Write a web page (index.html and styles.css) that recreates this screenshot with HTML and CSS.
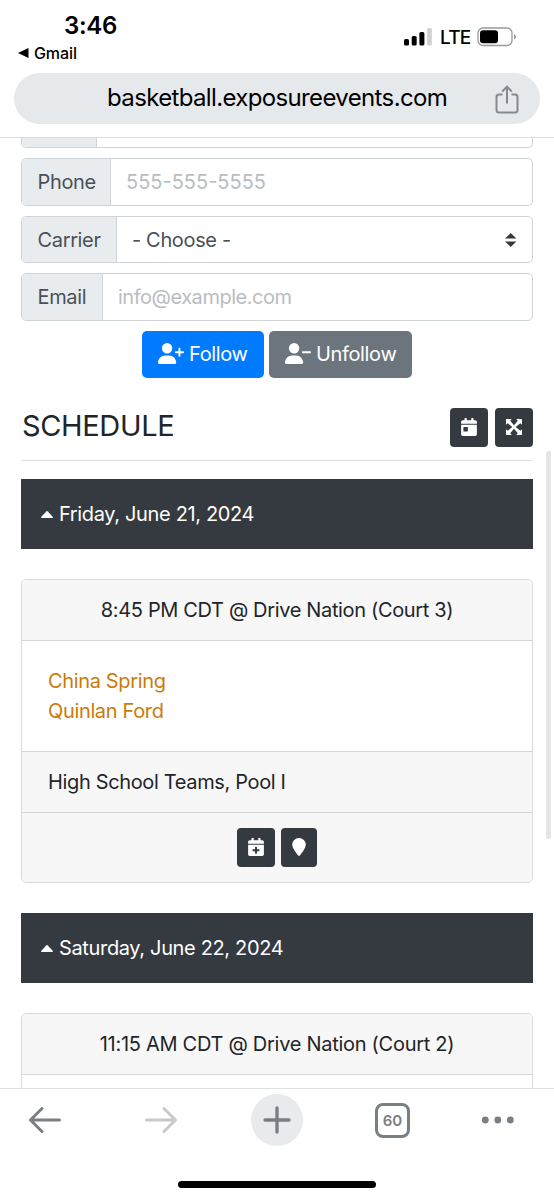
FILE: index.html
```html
<!DOCTYPE html>
<html lang="en">
<head>
<meta charset="utf-8">
<title>Schedule</title>
<link rel="stylesheet" href="styles.css">
</head>
<body>
<div class="phone">
  <header class="top">
    <div class="status">
      <div class="status-left">
        <div class="time"><span>3:46</span></div>
        <div class="back-app"><svg width="11" height="10" viewBox="0 0 11 10"><path d="M0 5 10.5 0v10z"/></svg><span>Gmail</span></div>
      </div>
      <div class="status-right">
        <svg class="signal" width="28" height="18" viewBox="0 0 28 18"><rect x="0" y="11" width="5" height="6.5" rx="1.5"/><rect x="7.7" y="8" width="5" height="9.5" rx="1.5"/><rect x="15.4" y="4" width="5" height="13.500" rx="1.500"/><rect x="23.100" y="0" width="4.700" height="17.500" rx="1.500" fill="#d0d0d0"/></svg>
        <span class="lte">LTE</span>
        <svg class="battery" width="40" height="20" viewBox="0 0 40 20"><rect x="1" y="1" width="34" height="17.500" rx="5" fill="none" stroke="#98989a" stroke-width="1.300"/><rect x="3" y="3.200" width="18" height="13" rx="3"/><path d="M37 7q2 1 2 2.800t-2 2.800z" fill="#98989a"/></svg>
      </div>
    </div>
    <div class="address">
      <span class="url">basketball.exposureevents.com</span>
      <svg class="share" width="24" height="30" viewBox="0 0 24 30"><path d="M7.500 9.500H4A2.500 2.500 0 0 0 1.500 12v13A2.500 2.500 0 0 0 4 27.500h16a2.500 2.500 0 0 0 2.500-2.500V12A2.500 2.500 0 0 0 20 9.500h-3.500M12 18.500V2M7.200 6.500 12 1.700l4.800 4.800" fill="none" stroke="#85898e" stroke-width="2"/></svg>
    </div>
  </header>

  <main class="page">
    <div class="field field-cut"><div class="label label-cut"></div><div class="input"></div></div>
    <div class="field"><div class="label label-phone"><span>Phone</span></div><div class="input placeholder"><span class="number">555-555-5555</span></div></div>
    <div class="field field-carrier"><div class="label label-carrier"><span>Carrier</span></div><div class="input select"><span>- Choose -</span><svg width="12" height="14" viewBox="0 0 12 14"><path d="M0 5.600 5.700 0l5.700 5.600zM0 8.400h11.400L5.700 14z" fill="#343a40"/></svg></div></div>
    <div class="field"><div class="label label-email"><span>Email</span></div><div class="input placeholder"><span class="mail">info@example.com</span></div></div>

    <div class="actions">
      <div class="btn btn-primary"><svg width="26" height="21" viewBox="0 0 640 512"><path d="M96 128a128 128 0 1 1 256 0A128 128 0 1 1 96 128zM0 482.300C0 383.800 79.800 304 178.300 304h91.400C368.200 304 448 383.800 448 482.300c0 16.400-13.300 29.700-29.700 29.700H29.700C13.300 512 0 498.700 0 482.300zM504 312V248H440c-13.300 0-24-10.700-24-24s10.700-24 24-24h64V136c0-13.300 10.700-24 24-24s24 10.700 24 24v64h64c13.300 0 24 10.700 24 24s-10.700 24-24 24H552v64c0 13.300-10.700 24-24 24s-24-10.700-24-24z"/></svg><span>Follow</span></div>
      <div class="btn btn-secondary"><svg width="26" height="21" viewBox="0 0 640 512"><path d="M96 128a128 128 0 1 1 256 0A128 128 0 1 1 96 128zM0 482.300C0 383.800 79.800 304 178.300 304h91.400C368.200 304 448 383.800 448 482.300c0 16.400-13.300 29.700-29.700 29.700H29.700C13.300 512 0 498.700 0 482.300zM440 200H616c13.300 0 24 10.700 24 24s-10.700 24-24 24H440c-13.300 0-24-10.700-24-24s10.700-24 24-24z"/></svg><span>Unfollow</span></div>
    </div>

    <div class="heading">
      <h1><span>SCHEDULE</span></h1>
      <div class="icon-btn"><svg width="16" height="18" viewBox="0 0 448 512"><path d="M0 464c0 26.500 21.500 48 48 48h352c26.500 0 48-21.500 48-48V192H0v272zm64-192c0-8.800 7.200-16 16-16h96c8.800 0 16 7.200 16 16v96c0 8.800-7.200 16-16 16H80c-8.800 0-16-7.200-16-16v-96zM400 64h-48V16c0-8.800-7.200-16-16-16h-32c-8.800 0-16 7.200-16 16v48H160V16c0-8.800-7.200-16-16-16h-32c-8.800 0-16 7.200-16 16v48H48C21.500 64 0 85.500 0 112v48h448v-48c0-26.500-21.500-48-48-48z"/></svg></div>
      <div class="icon-btn"><svg width="16" height="16" viewBox="0 0 16 16"><path d="M0 .6Q0 0 .6 0H5.800L4.200 1.700 8 6.300l3.800-4.600L10.200 0h5.200q.6 0 .6.600V5.800l-1.700-1.600L9.700 8l4.600 3.800L16 10.200v5.200q0 .6-.6.600h-5.200l1.600-1.700L8 9.700l-3.800 4.600L5.800 16H.6Q0 16 0 15.400v-5.200l1.700 1.600L6.300 8 1.700 4.200 0 5.800z"/></svg></div>
    </div>

    <div class="day"><svg width="12" height="7" viewBox="0 0 12 7"><path d="M.6 7Q-.4 6.600.5 5.600L5.200.5q.8-.8 1.600 0l4.700 5.100q.9 1-.1 1.400z"/></svg><span>Friday, June 21, 2024</span></div>

    <section class="card">
      <div class="card-head"><span>8:45 PM CDT @ Drive Nation (Court 3)</span></div>
      <div class="teams"><a><span>China Spring</span></a><a><span>Quinlan Ford</span></a></div>
      <div class="pool"><span>High School Teams, Pool I</span></div>
      <div class="tools">
        <div class="icon-btn"><svg width="16" height="18" viewBox="0 0 448 512"><path d="M0 464c0 26.500 21.500 48 48 48h352c26.500 0 48-21.500 48-48V192H0v272zM196 264q0-14 14-14h28q14 0 14 14v58h58q14 0 14 14v28q0 14-14 14h-58v58q0 14-14 14h-28q-14 0-14-14v-58h-58q-14 0-14-14v-28q0-14 14-14h58zM400 64h-48V16c0-8.800-7.200-16-16-16h-32c-8.800 0-16 7.200-16 16v48H160V16c0-8.800-7.200-16-16-16h-32c-8.800 0-16 7.200-16 16v48H48C21.500 64 0 85.500 0 112v48h448v-48c0-26.500-21.500-48-48-48z" fill-rule="evenodd"/></svg></div>
        <div class="icon-btn pin"><svg width="14" height="18" viewBox="0 0 384 512"><path d="M384 192c0 87.400-117 243-168.300 307.200-12.300 15.300-35.100 15.300-47.400 0C117 435 0 279.400 0 192 0 86 86 0 192 0s192 86 192 192z"/></svg></div>
      </div>
    </section>

    <div class="day"><svg width="12" height="7" viewBox="0 0 12 7"><path d="M.6 7Q-.4 6.600.5 5.600L5.200.5q.8-.8 1.600 0l4.700 5.100q.9 1-.1 1.400z"/></svg><span>Saturday, June 22, 2024</span></div>

    <section class="card">
      <div class="card-head"><span class="late">11:15 AM CDT @ Drive Nation (Court 2)</span></div>
      <div class="teams"></div>
    </section>
    <div class="scrollbar"></div>
  </main>

  <footer class="bottom">
    <nav class="nav">
      <svg width="34" height="28" viewBox="0 0 34 28"><path d="M31.500 14H2.500M14 2.500 2.500 14 14 25.500" fill="none" stroke="#7a7f83" stroke-width="3" stroke-linecap="round" stroke-linejoin="round"/></svg>
      <svg class="forward" width="34" height="28" viewBox="0 0 34 28"><path d="M2.500 14h29M20 2.500 31.500 14 20 25.500" fill="none" stroke="#c8c9ca" stroke-width="3" stroke-linecap="round" stroke-linejoin="round"/></svg>
      <div class="plus"><svg width="28" height="28" viewBox="0 0 28 28"><path d="M14 2v24M2 14h24" fill="none" stroke="#7a7f83" stroke-width="3.300" stroke-linecap="round"/></svg></div>
      <div class="tabs"><span>60</span></div>
      <svg class="more" width="34" height="8" viewBox="0 0 34 8" fill="#7a7f83"><circle cx="4.300" cy="4" r="3.400"/><circle cx="16.800" cy="4" r="3.400"/><circle cx="29.300" cy="4" r="3.400"/></svg>
    </nav>
    <div class="home"></div>
  </footer>
</div>
</body>
</html>
```
FILE: styles.css
```css
* { box-sizing: border-box; }
body { margin: 0; background: #fff; font-family: Inter, "Liberation Sans", sans-serif; font-size: 20px; color: #212529; }
svg { display: block; flex: none; }
span { white-space: nowrap; }
.phone { width: 554px; height: 1200px; display: flex; flex-direction: column; overflow: hidden; }

.top { height: 138px; flex: none; border-bottom: 1px solid #dcdddf; color: #000; }
.status { height: 73px; display: flex; justify-content: space-between; }
.status-left { padding: 10px 0 0 18px; }
.time { padding-left: 46px; height: 32px; line-height: 32px; font-size: 24px; font-weight: 600; letter-spacing: -0.3px; }
.back-app { display: flex; align-items: center; gap: 5px; height: 22px; font-size: 16px; font-weight: 500; letter-spacing: -0.1px; }
.status-right { display: flex; align-items: flex-start; padding: 27px 37px 0 0; }
.signal { margin-top: 1px; }
.lte { margin-left: 8px; font-size: 19px; line-height: 22px; font-weight: 500; width: 29px; letter-spacing: -0.8px; }
.battery { margin-left: 8px; }
.address { margin: 0 14px; height: 51px; border-radius: 26px; background: #e6e9ec; display: flex; align-items: center; justify-content: space-between; padding: 0 21px 0 93px; }
.url { font-size: 24px; line-height: 30px; letter-spacing: -0.64px; margin-top: -2px; }
.share { margin-top: 2px; }

.page { flex: 1; min-height: 0; overflow: hidden; position: relative; padding: 0 21px; background: #fff; letter-spacing: -0.35px; }
.field { display: flex; height: 48px; margin-bottom: 10px; border: 1.500px solid #ced4da; border-radius: 5px; overflow: hidden; color: #495057; }
.field-cut { height: 10px; border-top: 0; border-radius: 0 0 5px 5px; margin-bottom: 10px; }
.field-carrier { height: 47px; }
.label { background: #e9ecef; border-right: 1px solid #ced4da; padding-left: 15.500px; display: flex; align-items: center; }
.label-cut { width: 75px; }
.label-phone { width: 89px; }
.label-carrier { width: 95px; }
.label-email { width: 81px; }
.input { flex: 1; display: flex; align-items: center; padding-left: 15px; }
.placeholder { color: #b9bdc1; }
.number { letter-spacing: 0; }
.mail { letter-spacing: -0.47px; }
.select { justify-content: space-between; padding-right: 15px; }

.actions { display: flex; justify-content: center; gap: 5px; }
.btn { height: 47px; border-radius: 5px; display: flex; align-items: center; color: #fff; padding-left: 16px; gap: 5px; }
.btn svg { fill: #fff; margin-top: -3px; }
.btn span { margin-top: -1px; }
.btn-primary { width: 122px; background: #007bff; }
.btn-secondary { width: 143px; background: #6c757d; }

.heading { display: flex; align-items: center; margin-top: 21px; height: 62px; border-bottom: 1px solid #dfe1e5; padding-bottom: 4px; }
.heading h1 { flex: 1; margin: 0; font-size: 29px; line-height: 36px; font-weight: 400; padding: 0 0 4px 1px; }
.heading .icon-btn + .icon-btn { margin-left: 7px; }
.icon-btn { width: 38px; height: 39px; border-radius: 4px; background: #343a40; display: flex; align-items: center; justify-content: center; padding-bottom: 1px; }
.icon-btn svg { fill: #fff; }
.day { height: 70px; background: #343a40; color: #fff; display: flex; align-items: center; gap: 6px; padding-left: 20px; margin-top: 18px; }
.day svg { fill: #fff; }

.card { margin: 30px 0; border: 1px solid #d9dadb; border-radius: 5px; overflow: hidden; }
.card-head { height: 61px; background: #f7f7f7; border-bottom: 1px solid #d5d6d7; display: flex; align-items: center; justify-content: center; }
.late { letter-spacing: -0.28px; }
.teams { height: 111px; padding: 25px 26px; border-bottom: 1px solid #d5d6d7; color: #cb7b0a; }
.teams a { display: block; line-height: 30px; height: 30px; }
.pool { height: 61px; background: #f7f7f7; border-bottom: 1px solid #d5d6d7; padding-left: 26px; display: flex; align-items: center; }
.tools { height: 69px; background: #f7f7f7; display: flex; align-items: center; justify-content: center; gap: 6px; }
.pin { width: 36px; }
.scrollbar { position: absolute; right: 3px; top: 313px; width: 5px; height: 388px; border-radius: 3px; background: #e5e5e6; }

.bottom { height: 112px; flex: none; border-top: 1px solid #dfe0e2; }
.nav { height: 62px; display: flex; align-items: center; padding-left: 28px; }
.forward { margin-left: 82px; }
.plus { width: 52px; height: 52px; margin-left: 73px; border-radius: 50%; background: #e8eaed; display: flex; align-items: center; justify-content: center; }
.tabs { width: 35px; height: 35px; margin-left: 72px; border: 3px solid #7a7f83; border-radius: 8px; display: flex; align-items: center; justify-content: center; font-size: 15px; font-weight: 600; color: #7a7f83; }
.more { margin-left: 71px; }
.home { width: 198px; height: 7px; margin: 30px auto 0; border-radius: 4px; background: #000; }
```
